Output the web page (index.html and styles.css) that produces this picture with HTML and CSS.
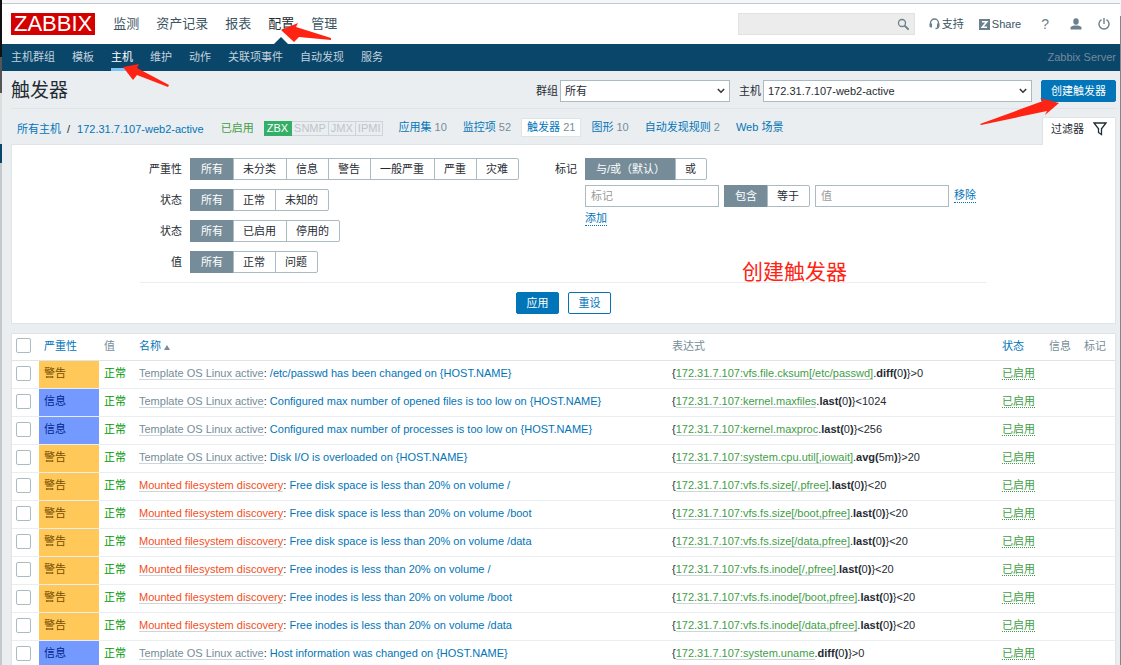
FILE: index.html
```html
<!DOCTYPE html>
<html lang="zh-CN">
<head>
<meta charset="utf-8">
<meta name="viewport" content="width=device-width, initial-scale=1">
<title>触发器</title>
<link rel="stylesheet" href="styles.css">
</head>
<body>
<div class="shell">
<div class="page">
  <header class="top">
    <a class="logo" href="#">ZABBIX</a>
    <nav class="menu">
      <a href="#">监测</a><a href="#">资产记录</a><a href="#">报表</a><a class="current" href="#">配置</a><a href="#">管理</a>
    </nav>
    <div class="search">
      <input type="search" aria-label="搜索">
      <button type="button" aria-label="搜索"><svg width="13" height="13" viewBox="0 0 13 13"><circle cx="5" cy="5" r="3.5" fill="none" stroke="#6b808d" stroke-width="1.3"/><path d="M7.6 7.6l4 4" stroke="#6b808d" stroke-width="2"/></svg></button>
    </div>
    <a class="tool support" href="#"><svg width="11" height="12" viewBox="0 0 11 12"><path d="M1.5 7V5a4 4 0 0 1 8 0v3.500q0 2-3 2" fill="none" stroke="#6b808d" stroke-width="1.3"/><path d="M.5 5.500h2.500v4H1.500l-1-1zM8 5.500h2.500v3l-1 1H8z" fill="#6b808d"/></svg>支持</a>
    <a class="tool share" href="#"><svg width="11" height="11" viewBox="0 0 11 11"><path d="M0 0h11v11H0z" fill="#6b808d"/><path d="M3 2.800h4.800L3.300 8.200H8" fill="none" stroke="#fff" stroke-width="1.600"/></svg>Share</a>
    <a class="tool help" href="#" aria-label="帮助">?</a>
    <a class="tool user" href="#" aria-label="用户"><svg width="12" height="12" viewBox="0 0 12 12"><path d="M3.300 3a2.700 2.700 0 0 1 5.400 0v.8a2.700 2.900 0 0 1-5.400 0zM.5 11.500V9.800Q.5 8 4 7.400h4q3.500.6 3.500 2.400v1.700z" fill="#6b808d"/></svg></a>
    <a class="tool" href="#" aria-label="退出"><svg width="12" height="12" viewBox="0 0 12 12"><path d="M3.500 1.700a5 5 0 1 0 5 0M6 0v6" fill="none" stroke="#6b808d" stroke-width="1.400"/></svg></a>
  </header>
  <nav class="subnav">
    <a href="#">主机群组</a><a href="#">模板</a><a class="current" href="#">主机</a><a href="#">维护</a><a href="#">动作</a><a href="#">关联项事件</a><a href="#">自动发现</a><a href="#">服务</a>
    <span class="server">Zabbix Server</span>
  </nav>
  <main class="content">
    <div class="heading">
      <h1>触发器</h1>
      <label for="group">群组</label>
      <div class="pick pick-group"><select id="group"><option>所有</option></select><svg width="8" height="6" viewBox="0 0 8 6"><path d="M.8 1L4 4.200 7.200 1" fill="none" stroke="#333" stroke-width="1.500"/></svg></div>
      <label for="host">主机</label>
      <div class="pick pick-host"><select id="host"><option>172.31.7.107-web2-active</option></select><svg width="8" height="6" viewBox="0 0 8 6"><path d="M.8 1L4 4.200 7.200 1" fill="none" stroke="#333" stroke-width="1.500"/></svg></div>
      <button class="btn create" type="button">创建触发器</button>
    </div>
    <div class="objects">
      <div class="crumbs"><a href="#">所有主机</a><span>/</span><a href="#">172.31.7.107-web2-active</a></div>
      <span class="enabled">已启用</span>
      <div class="badges"><span class="on">ZBX</span><span>SNMP</span><span>JMX</span><span>IPMI</span></div>
      <a class="obj" href="#">应用集 <sup>10</sup></a>
      <a class="obj" href="#">监控项 <sup>52</sup></a>
      <a class="obj chosen" href="#">触发器 <sup>21</sup></a>
      <a class="obj" href="#">图形 <sup>10</sup></a>
      <a class="obj" href="#">自动发现规则 <sup>2</sup></a>
      <a class="obj" href="#">Web 场景</a>
      <button class="filter-tab" type="button">过滤器<svg width="14" height="14" viewBox="0 0 14 14"><path d="M1 1h12L8.500 6.800v5.700l-3-2V6.800z" fill="none" stroke="#1f2c33" stroke-width="1.300"/></svg></button>
    </div>
    <form class="filter">
      <div class="filter-body">
        <div class="name">严重性</div>
        <div class="radios" role="group" aria-label="严重性">
          <label><input type="radio" name="sev" checked>所有</label><label><input type="radio" name="sev">未分类</label><label><input type="radio" name="sev">信息</label><label><input type="radio" name="sev">警告</label><label><input type="radio" name="sev">一般严重</label><label><input type="radio" name="sev">严重</label><label><input type="radio" name="sev">灾难</label>
        </div>
        <div class="name">标记</div>
        <div class="tags">
          <div class="radios"><label><input type="radio" name="eval" checked>与/或（默认）</label><label><input type="radio" name="eval">或</label></div>
          <div class="tag-row">
            <input class="text" type="text" placeholder="标记" aria-label="标记">
            <div class="radios"><label><input type="radio" name="op" checked>包含</label><label><input type="radio" name="op">等于</label></div>
            <input class="text" type="text" placeholder="值" aria-label="值">
            <button class="link" type="button">移除</button>
          </div>
          <button class="link" type="button">添加</button>
        </div>
        <div class="name">状态</div>
        <div class="radios" role="group" aria-label="状态"><label><input type="radio" name="state" checked>所有</label><label><input type="radio" name="state">正常</label><label><input type="radio" name="state">未知的</label></div>
        <div class="name">状态</div>
        <div class="radios" role="group" aria-label="状态"><label><input type="radio" name="status" checked>所有</label><label><input type="radio" name="status">已启用</label><label><input type="radio" name="status">停用的</label></div>
        <div class="name">值</div>
        <div class="radios" role="group" aria-label="值"><label><input type="radio" name="value" checked>所有</label><label><input type="radio" name="value">正常</label><label><input type="radio" name="value">问题</label></div>
      </div>
      <div class="filter-foot"><button class="btn" type="button">应用</button><button class="btn alt" type="reset">重设</button></div>
    </form>
    <table class="list">
      <colgroup><col class="c-check"><col class="c-sev"><col class="c-val"><col><col class="c-expr"><col class="c-status"><col class="c-info"><col class="c-tags"></colgroup>
      <thead><tr><th><input type="checkbox" aria-label="全选"></th><th><a href="#">严重性</a></th><th>值</th><th><a href="#">名称<i class="sort"></i></a></th><th>表达式</th><th><a href="#">状态</a></th><th>信息</th><th>标记</th></tr></thead>
      <tbody>
        <tr><td><input type="checkbox" aria-label="选择"></td><td class="warn">警告</td><td class="ok">正常</td><td><a class="tpl" href="#">Template OS Linux active</a>: <a href="#">/etc/passwd has been changed on {HOST.NAME}</a></td><td>{<a class="item" href="#">172.31.7.107:vfs.file.cksum[/etc/passwd]</a>.<b>diff(</b>0<b>)</b>}&gt;0</td><td><a class="state" href="#">已启用</a></td><td></td><td></td></tr>
        <tr><td><input type="checkbox" aria-label="选择"></td><td class="info">信息</td><td class="ok">正常</td><td><a class="tpl" href="#">Template OS Linux active</a>: <a href="#">Configured max number of opened files is too low on {HOST.NAME}</a></td><td>{<a class="item" href="#">172.31.7.107:kernel.maxfiles</a>.<b>last(</b>0<b>)</b>}&lt;1024</td><td><a class="state" href="#">已启用</a></td><td></td><td></td></tr>
        <tr><td><input type="checkbox" aria-label="选择"></td><td class="info">信息</td><td class="ok">正常</td><td><a class="tpl" href="#">Template OS Linux active</a>: <a href="#">Configured max number of processes is too low on {HOST.NAME}</a></td><td>{<a class="item" href="#">172.31.7.107:kernel.maxproc</a>.<b>last(</b>0<b>)</b>}&lt;256</td><td><a class="state" href="#">已启用</a></td><td></td><td></td></tr>
        <tr><td><input type="checkbox" aria-label="选择"></td><td class="warn">警告</td><td class="ok">正常</td><td><a class="tpl" href="#">Template OS Linux active</a>: <a href="#">Disk I/O is overloaded on {HOST.NAME}</a></td><td>{<a class="item" href="#">172.31.7.107:system.cpu.util[,iowait]</a>.<b>avg(</b>5m<b>)</b>}&gt;20</td><td><a class="state" href="#">已启用</a></td><td></td><td></td></tr>
        <tr><td><input type="checkbox" aria-label="选择"></td><td class="warn">警告</td><td class="ok">正常</td><td><a class="lld" href="#">Mounted filesystem discovery</a>: <a href="#">Free disk space is less than 20% on volume /</a></td><td>{<a class="item" href="#">172.31.7.107:vfs.fs.size[/,pfree]</a>.<b>last(</b>0<b>)</b>}&lt;20</td><td><a class="state" href="#">已启用</a></td><td></td><td></td></tr>
        <tr><td><input type="checkbox" aria-label="选择"></td><td class="warn">警告</td><td class="ok">正常</td><td><a class="lld" href="#">Mounted filesystem discovery</a>: <a href="#">Free disk space is less than 20% on volume /boot</a></td><td>{<a class="item" href="#">172.31.7.107:vfs.fs.size[/boot,pfree]</a>.<b>last(</b>0<b>)</b>}&lt;20</td><td><a class="state" href="#">已启用</a></td><td></td><td></td></tr>
        <tr><td><input type="checkbox" aria-label="选择"></td><td class="warn">警告</td><td class="ok">正常</td><td><a class="lld" href="#">Mounted filesystem discovery</a>: <a href="#">Free disk space is less than 20% on volume /data</a></td><td>{<a class="item" href="#">172.31.7.107:vfs.fs.size[/data,pfree]</a>.<b>last(</b>0<b>)</b>}&lt;20</td><td><a class="state" href="#">已启用</a></td><td></td><td></td></tr>
        <tr><td><input type="checkbox" aria-label="选择"></td><td class="warn">警告</td><td class="ok">正常</td><td><a class="lld" href="#">Mounted filesystem discovery</a>: <a href="#">Free inodes is less than 20% on volume /</a></td><td>{<a class="item" href="#">172.31.7.107:vfs.fs.inode[/,pfree]</a>.<b>last(</b>0<b>)</b>}&lt;20</td><td><a class="state" href="#">已启用</a></td><td></td><td></td></tr>
        <tr><td><input type="checkbox" aria-label="选择"></td><td class="warn">警告</td><td class="ok">正常</td><td><a class="lld" href="#">Mounted filesystem discovery</a>: <a href="#">Free inodes is less than 20% on volume /boot</a></td><td>{<a class="item" href="#">172.31.7.107:vfs.fs.inode[/boot,pfree]</a>.<b>last(</b>0<b>)</b>}&lt;20</td><td><a class="state" href="#">已启用</a></td><td></td><td></td></tr>
        <tr><td><input type="checkbox" aria-label="选择"></td><td class="warn">警告</td><td class="ok">正常</td><td><a class="lld" href="#">Mounted filesystem discovery</a>: <a href="#">Free inodes is less than 20% on volume /data</a></td><td>{<a class="item" href="#">172.31.7.107:vfs.fs.inode[/data,pfree]</a>.<b>last(</b>0<b>)</b>}&lt;20</td><td><a class="state" href="#">已启用</a></td><td></td><td></td></tr>
        <tr><td><input type="checkbox" aria-label="选择"></td><td class="info">信息</td><td class="ok">正常</td><td><a class="tpl" href="#">Template OS Linux active</a>: <a href="#">Host information was changed on {HOST.NAME}</a></td><td>{<a class="item" href="#">172.31.7.107:system.uname</a>.<b>diff(</b>0<b>)</b>}&gt;0</td><td><a class="state" href="#">已启用</a></td><td></td><td></td></tr>
      </tbody>
    </table>
  </main>
</div>
</div>
<svg class="arrow arrow-menu" width="52" height="22" viewBox="0 0 52 22"><path d="M1 8L18 1 16 5 51 16 51 18 19 15 14 20z"/></svg>
<svg class="arrow arrow-host" width="48" height="24" viewBox="0 0 48 24"><path d="M1 3L17 0 15 4 47 21 46 23 15 11 11 16z"/></svg>
<svg class="arrow arrow-create" width="80" height="28" viewBox="0 0 80 28"><path d="M79 6L60 1 63 4 0 27 1 28 67 14 65 18z"/></svg>
<div class="note">创建触发器</div>
</body>
</html>
```
FILE: styles.css
```css
* { box-sizing: border-box; }
html { scrollbar-width: none; }
body {
  margin: 0;
  position: relative;
  background: #ebeef0;
  color: #1f2c33;
  font: 11px/14px "Liberation Sans", "Noto Sans CJK SC", sans-serif;
}
a { color: #0275b8; text-decoration: none; }
button, input, select { font: inherit; color: inherit; margin: 0; }
button { cursor: pointer; }
svg { display: block; flex: none; }

.shell {
  min-height: 100vh;
  padding: 0 1px 0 2px;
  background:
    linear-gradient(#f6f7f9 0 16px, #85888b 16px) right / 1px 100% no-repeat,
    linear-gradient(#111 0 57px, #555 57px 93px, #ddd 93px 144px, #0a466a 144px 163px, #c4c8cb 163px) left / 2px 100% no-repeat;
}
.page {
  min-height: 100vh;
  background: #ebeef0;
  border-top: 3px solid #f6f7f9;
}

.top {
  display: flex;
  align-items: center;
  height: 41px;
  padding: 0 10px 0 9px;
  border-top: 1px solid #c5c9cd;
  background: #fff;
}
.logo {
  padding: 0 3px;
  background: #d40000;
  color: #fff;
  font-size: 22px;
  line-height: 22px;
}
.menu { display: flex; gap: 17px; margin-left: 18px; font-size: 13px; line-height: 40px; }
.menu a { color: #3c5563; position: relative; }
.menu .current { color: #1f2c33; }
.menu .current::after {
  content: "";
  position: absolute;
  left: 50%;
  bottom: 0;
  margin-left: -7px;
  border: 7px solid transparent;
  border-top: 0;
  border-bottom-color: #0a466a;
}
.search {
  display: flex;
  align-items: center;
  width: 177px;
  height: 22px;
  margin-left: auto;
  padding-right: 4px;
  border: 1px solid #e2e2e2;
  background: #ececec;
}
.search input { flex: 1; min-width: 0; border: 0; padding: 0 5px; background: none; outline: 0; }
.search button { border: 0; padding: 0; background: none; }
.tool { display: flex; align-items: center; gap: 2px; color: #3c5563; }
.support { margin-left: 14px; }
.share { margin: 0 20px 0 15px; }
.help { margin-right: 21px; font-size: 14px; color: #6b808d; }
.user { margin-right: 16px; }

.subnav {
  display: flex;
  gap: 17px;
  height: 27px;
  padding: 0 4px 0 9px;
  background: #0a466a;
  line-height: 26px;
}
.subnav a { color: #c3d3dd; }
.subnav .current { color: #fff; border-bottom: 3px solid #7cc4f5; }
.server { margin-left: auto; color: #73899a; }

.content { padding: 0 4px 10px 9px; }
.heading {
  display: flex;
  align-items: center;
  height: 38px;
  padding-top: 2px;
  border-bottom: 1px solid #dfe4e7;
}
h1 { margin: 0 auto 0 0; font-size: 19px; line-height: 24px; font-weight: 400; }
.heading label { margin-right: 2px; }
.pick { display: grid; align-items: center; margin-right: 9px; }
.pick select, .pick svg { grid-area: 1 / 1; }
.pick svg { justify-self: end; margin-right: 5px; pointer-events: none; }
.pick select {
  appearance: none;
  width: 100%;
  height: 22px;
  padding: 0 4px;
  border: 1px solid #acbbc2;
  background: #fff;
}
.pick-group { width: 170px; }
.pick-host { width: 269px; }
.btn {
  height: 22px;
  padding: 0 9px;
  border: 1px solid #0275b8;
  border-radius: 2px;
  background: #0275b8;
  color: #fff;
  line-height: 18px;
}
.alt { background: #fff; color: #0275b8; }

.objects { display: flex; align-items: center; height: 35px; padding: 2px 0 0 6px; }
.crumbs { display: flex; gap: 6px; margin: 2px 17px 0 0; white-space: pre; }
.crumbs span { padding-right: 1px; }
.enabled { color: #429e47; margin-right: 10px; }
.badges { display: flex; margin: 2px 9px 0 0; color: #bdc5ca; }
.badges span { height: 15px; padding: 0 2px; border: 1px solid #ccd5d9; border-left: 0; line-height: 13px; }
.badges .on { border-color: #34af67; background: #34af67; color: #fff; padding: 0 3px; }
.obj { height: 19px; padding: 0 5px; margin-right: 4px; border: 1px solid transparent; line-height: 17px; white-space: nowrap; }
.obj sup { font-size: 11px; line-height: 14px; vertical-align: baseline; color: #768d99; }
.obj.chosen { border-color: #dfe4e7; background: #fff; }
.filter-tab {
  display: flex;
  align-items: center;
  align-self: flex-end;
  gap: 9px;
  height: 28px;
  margin: 0 0 -1px auto;
  padding: 0 8px 6px;
  border: 1px solid #dfe4e7;
  border-bottom: 0;
  background: #fff;
}
.filter { border: 1px solid #dfe4e7; background: #fff; }
.filter-body {
  display: grid;
  grid-template-columns: 42px 355px 24px 1fr;
  gap: 9px 8px;
  max-width: 847px;
  margin: 0 auto;
  padding: 13px 0 9px;
  border-bottom: 1px solid #ebeef0;
}
.name { grid-column: 1; text-align: right; line-height: 22px; }
.name:nth-child(3) { grid-column: 3; }
.tags { grid-area: 1 / 4 / span 3 / auto; display: flex; flex-direction: column; align-items: flex-start; gap: 5px; }
.tag-row { display: flex; align-items: center; gap: 5px; }
.radios {
  display: flex;
  justify-self: start;
  height: 22px;
  border: 1px solid #acbbc2;
  border-radius: 2px;
  line-height: 20px;
  white-space: nowrap;
}
.radios label { padding: 0 10px; }
.radios label + label { padding: 0 10px 0 9px; border-left: 1px solid #acbbc2; }
.radios input { position: absolute; opacity: 0; width: 1px; height: 1px; }
.radios label:has(:checked) { margin: -1px 0 -1px -1px; padding-left: 11px; line-height: 22px; background: #768d99; color: #fff; }
.text { width: 134px; height: 22px; padding: 0 5px; border: 1px solid #acbbc2; background: #fff; }
.text::placeholder { color: #9a9a9a; opacity: 1; }
.link { padding: 0; border: 0; border-bottom: 1px dotted #0275b8; background: none; color: #0275b8; line-height: 13px; }
.filter-foot { display: flex; justify-content: center; gap: 9px; padding: 9px 0; }
.filter-foot .btn { min-width: 43px; }

.list {
  width: 100%;
  margin-top: 9px;
  border: 1px solid #dfe4e7;
  border-collapse: separate;
  border-spacing: 0;
  table-layout: fixed;
  background: #fff;
}
.c-check { width: 27px; }
.c-sev { width: 60px; }
.c-val { width: 35px; }
.c-expr { width: 330px; }
.c-status { width: 47px; }
.c-info { width: 35px; }
.c-tags { width: 36px; }
.list th, .list td {
  height: 28px;
  padding: 0 5px 3px;
  border-bottom: 1px solid #ebeef0;
  text-align: left;
  font-weight: 400;
  white-space: nowrap;
}
.list th { height: 27px; border-color: #dfe4e7; color: #768d99; }
.list th:first-child, .list td:first-child { padding: 0 4px 3px; }
.list input {
  display: block;
  appearance: none;
  width: 15px;
  height: 15px;
  border: 1px solid #acbbc2;
  border-radius: 2px;
  background: #fff;
}
.sort { display: inline-block; margin-left: 3px; border: 3px solid transparent; border-top: 0; border-bottom: 5px solid #768d99; }
.list .warn { background: #ffc859; color: #734d00; }
.list .info { background: #7499ff; color: #00268e; }
.list .ok { color: #009900; }
.tpl, .lld, .item { border-bottom: 1px solid #ccd5d9; }
.tpl { color: #768d99; }
.lld { color: #f24f1d; }
.item { color: #429e47; }
.state { color: #429e47; border-bottom: 1px dotted #429e47; }

/* Callouts drawn over the page */
.arrow { position: absolute; fill: #fe2312; }
.arrow-menu { left: 280px; top: 22px; }
.arrow-host { left: 122px; top: 64px; }
.arrow-create { left: 980px; top: 97px; }
.note { position: absolute; left: 742px; top: 260px; color: #fe2312; font-size: 21px; line-height: 24px; }
```
